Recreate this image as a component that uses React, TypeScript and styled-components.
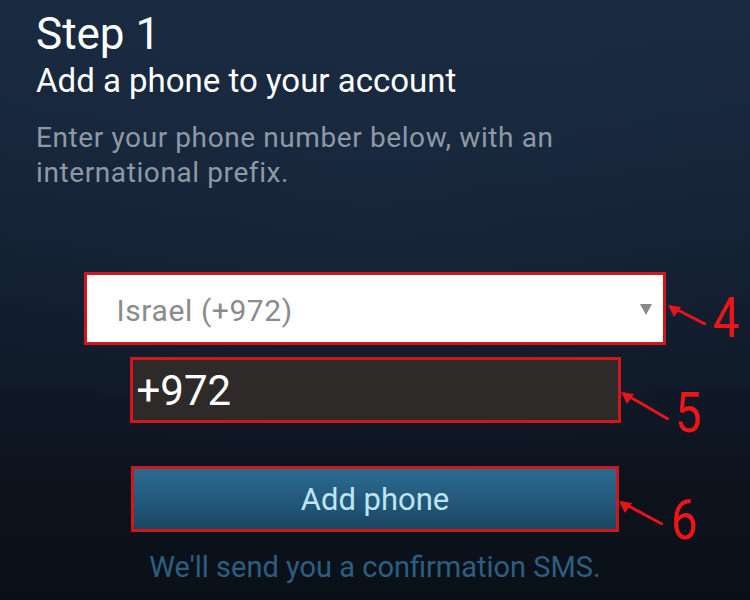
import styled, { createGlobalStyle } from 'styled-components';

const GlobalStyle = createGlobalStyle`
  html, body {
    margin: 0;
    padding: 0;
    width: 750px;
    height: 600px;
    overflow: hidden;
  }
  body {
    font-family: Roboto, "Noto Sans", Arial, sans-serif;
  }
`;

type CalloutProps = { $left: number; $top: number };

const Arrow = ({ width, height }: { width: number; height: number }) => (
  <svg width={width} height={height} viewBox={`0 0 ${width} ${height}`}>
    <line
      x1={4}
      y1={2}
      x2={width - 1}
      y2={height - 1}
      stroke="#e8141a"
      strokeWidth={3}
      strokeLinecap="round"
    />
    <polygon points="0,0 13,2 6,12" fill="#e8141a" />
  </svg>
);

const Annotation = ({
  num,
  left,
  top,
  arrowW,
  arrowH,
  numLeft,
  numTop,
}: {
  num: string;
  left: number;
  top: number;
  arrowW: number;
  arrowH: number;
  numLeft: number;
  numTop: number;
}) => (
  <>
    <ArrowSlot $left={left} $top={top}>
      <Arrow width={arrowW} height={arrowH} />
    </ArrowSlot>
    <Number $left={numLeft} $top={numTop}>
      {num}
    </Number>
  </>
);

const App = () => {
  return (
    <Screen>
      <GlobalStyle />
      <Header>
        <Title>Step 1</Title>
        <Subtitle>Add a phone to your account</Subtitle>
        <Hint>
          Enter your phone number below, with an
          <br />
          international prefix.
        </Hint>
      </Header>

      <Form>
        <SelectBox>
          <SelectText>Israel (+972)</SelectText>
          <Caret />
          <Annotation num="4" left={5} top={30} arrowW={38} arrowH={20} numLeft={50} numTop={22} />
        </SelectBox>

        <PhoneInput>
          <PhoneText>+972</PhoneText>
          <Annotation num="5" left={3} top={32} arrowW={48} arrowH={28} numLeft={57} numTop={32} />
        </PhoneInput>

        <AddButton>
          Add phone
          <Annotation num="6" left={3} top={32} arrowW={44} arrowH={24} numLeft={55} numTop={30} />
        </AddButton>

        <Footnote>We'll send you a confirmation SMS.</Footnote>
      </Form>
    </Screen>
  );
};

const Screen = styled.div`
  width: 750px;
  height: 600px;
  box-sizing: border-box;
  padding-top: 8px;
  background:
    radial-gradient(ellipse 90% 70% at 50% 30%, rgba(30, 48, 70, 0.25), rgba(0, 0, 0, 0) 70%),
    linear-gradient(180deg, #1a2a40 0%, #17263b 25%, #111d2d 55%, #0c131d 80%, #0a1018 100%);
  display: flex;
  flex-direction: column;
  overflow: hidden;
`;

const Header = styled.div`
  padding-left: 36px;
  display: flex;
  flex-direction: column;
`;

const Title = styled.div`
  font-size: 44px;
  line-height: 52px;
  color: #ffffff;
`;

const Subtitle = styled.div`
  margin-top: 3px;
  font-size: 33px;
  line-height: 36px;
  color: #ffffff;
`;

const Hint = styled.div`
  margin-top: 21px;
  font-size: 28px;
  line-height: 35px;
  letter-spacing: 0.6px;
  color: #8e99a6;
`;

const Form = styled.div`
  margin-top: 82px;
  display: flex;
  flex-direction: column;
  align-items: center;
`;

const FieldBase = styled.div`
  position: relative;
  box-sizing: border-box;
  border: 3px solid #d2161b;
  display: flex;
  align-items: center;
`;

const SelectBox = styled(FieldBase)`
  width: 582px;
  height: 73px;
  background: #ffffff;
  padding: 4px 0 0 30px;
  margin-left: -1px;
`;

const SelectText = styled.span`
  font-size: 30px;
  letter-spacing: 0.6px;
  color: #8b8b8b;
`;

const Caret = styled.span`
  position: absolute;
  right: 11px;
  top: 29px;
  width: 0;
  height: 0;
  border-left: 6px solid transparent;
  border-right: 6px solid transparent;
  border-top: 11px solid #8a8a8a;
`;

const PhoneInput = styled(FieldBase)`
  margin-top: 12px;
  width: 491px;
  height: 66px;
  background: #2e2a2a;
  padding-left: 4px;
`;

const PhoneText = styled.span`
  font-size: 42px;
  color: #ffffff;
`;

const AddButton = styled(FieldBase)`
  margin-top: 43px;
  width: 488px;
  height: 66px;
  justify-content: center;
  font-size: 31px;
  color: #bde4f5;
  background: linear-gradient(180deg, #2b6b92 0%, #235a7c 50%, #1b4662 100%);
`;

const Footnote = styled.div`
  margin-top: 18px;
  font-size: 29px;
  line-height: 34px;
  color: #2b5f82;
`;

const ArrowSlot = styled.div<CalloutProps>`
  position: absolute;
  left: calc(100% + ${(p) => p.$left}px);
  top: ${(p) => p.$top}px;
  display: flex;
`;

const Number = styled.span<CalloutProps>`
  position: absolute;
  left: calc(100% + ${(p) => p.$left}px);
  top: ${(p) => p.$top}px;
  font-family: Roboto, "Liberation Sans", sans-serif;
  font-size: 56px;
  line-height: 1;
  color: #ee1418;
  transform: scaleX(0.85);
  transform-origin: left top;
  margin-top: -7px;
`;

export default App;
